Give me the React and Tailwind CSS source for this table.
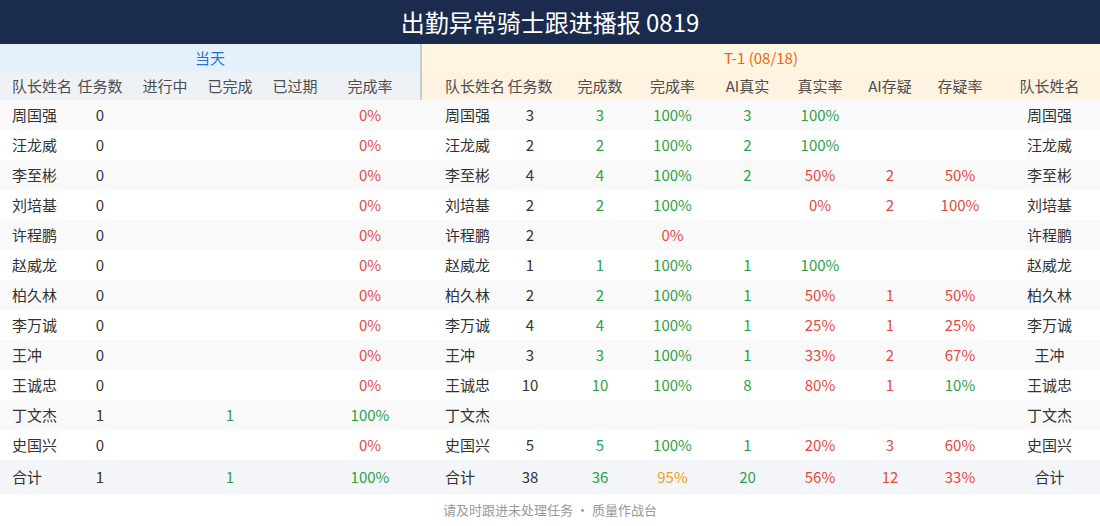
import React from 'react';

const G = 'text-[#2ea04a]';
const R = 'text-[#e24a43]';
const O = 'text-[#e6a023]';

const today = [
  ['周国强', '0', '', '', '', ['0%', R]],
  ['汪龙威', '0', '', '', '', ['0%', R]],
  ['李至彬', '0', '', '', '', ['0%', R]],
  ['刘培基', '0', '', '', '', ['0%', R]],
  ['许程鹏', '0', '', '', '', ['0%', R]],
  ['赵威龙', '0', '', '', '', ['0%', R]],
  ['柏久林', '0', '', '', '', ['0%', R]],
  ['李万诚', '0', '', '', '', ['0%', R]],
  ['王冲', '0', '', '', '', ['0%', R]],
  ['王诚忠', '0', '', '', '', ['0%', R]],
  ['丁文杰', '1', '', '1', '', ['100%', G]],
  ['史国兴', '0', '', '', '', ['0%', R]],
];

// name, tasks, done, doneRate, aiReal, realRate, aiDoubt, doubtRate
const prev = [
  ['周国强', '3', '3', ['100%', G], '3', ['100%', G], '', ['', '']],
  ['汪龙威', '2', '2', ['100%', G], '2', ['100%', G], '', ['', '']],
  ['李至彬', '4', '4', ['100%', G], '2', ['50%', R], '2', ['50%', R]],
  ['刘培基', '2', '2', ['100%', G], '', ['0%', R], '2', ['100%', R]],
  ['许程鹏', '2', '', ['0%', R], '', ['', ''], '', ['', '']],
  ['赵威龙', '1', '1', ['100%', G], '1', ['100%', G], '', ['', '']],
  ['柏久林', '2', '2', ['100%', G], '1', ['50%', R], '1', ['50%', R]],
  ['李万诚', '4', '4', ['100%', G], '1', ['25%', R], '1', ['25%', R]],
  ['王冲', '3', '3', ['100%', G], '1', ['33%', R], '2', ['67%', R]],
  ['王诚忠', '10', '10', ['100%', G], '8', ['80%', R], '1', ['10%', G]],
  ['丁文杰', '', '', ['', ''], '', ['', ''], '', ['', '']],
  ['史国兴', '5', '5', ['100%', G], '1', ['20%', R], '3', ['60%', R]],
];

const rowGrid =
  'grid grid-cols-[70px_60px_70px_60px_70px_80px_12px_73px_70px_70px_75px_75px_70px_70px_70px_1fr] items-center';

const Row = ({ t, p, bg, h }) => (
  <div className={`${rowGrid} ${bg} ${h} text-[15px] text-[#333] whitespace-nowrap`}>
    <div className="pl-3">{t[0]}</div>
    <div className="text-center">{t[1]}</div>
    <div className={`text-center ${G}`}>{t[2]}</div>
    <div className={`text-center ${G}`}>{t[3]}</div>
    <div className={`text-center ${R}`}>{t[4]}</div>
    <div className={`text-center ${t[5][1]}`}>{t[5][0]}</div>
    <div />
    <div className="pl-[23px]">{p[0]}</div>
    <div className="text-center">{p[1]}</div>
    <div className={`text-center ${G}`}>{p[2]}</div>
    <div className={`text-center ${p[3][1]}`}>{p[3][0]}</div>
    <div className={`text-center ${G}`}>{p[4]}</div>
    <div className={`text-center ${p[5][1]}`}>{p[5][0]}</div>
    <div className={`text-center ${R}`}>{p[6]}</div>
    <div className={`text-center ${p[7][1]}`}>{p[7][0]}</div>
    <div className="text-center pl-1">{p[0]}</div>
  </div>
);

export default function App() {
  return (
    <div
      className="w-[1100px] h-[526px] bg-white overflow-hidden"
      style={{ fontFamily: '"Noto Sans CJK SC", "Noto Sans", sans-serif' }}
    >
      <div className="h-[44px] bg-[#1a2b4d] flex items-center justify-center text-white text-[24px]">
        出勤异常骑士跟进播报 0819
      </div>

      {/* header */}
      <div className="flex text-[15px] whitespace-nowrap">
        <div className="w-[420px]">
          <div className="h-[28px] bg-[#e4f1fd] flex items-center justify-center text-[#1f74d4]">当天</div>
          <div className="h-[28px] bg-[#eef1f5] text-[#4d4d4d] grid grid-cols-[70px_60px_70px_60px_70px_80px] items-center">
            <div className="pl-3">队长姓名</div>
            <div className="text-center">任务数</div>
            <div className="text-center">进行中</div>
            <div className="text-center">已完成</div>
            <div className="text-center">已过期</div>
            <div className="text-center">完成率</div>
          </div>
        </div>
        <div className="flex-1 border-l-2 border-[#c9cdd3]">
          <div className="h-[28px] bg-[#fff6e2] flex items-center justify-center text-[#f0650e]">T-1 (08/18)</div>
          <div className="h-[28px] bg-[#fef2e1] text-[#4d4d4d] grid grid-cols-[73px_70px_70px_75px_75px_70px_70px_70px_1fr] items-center">
            <div className="pl-[23px]">队长姓名</div>
            <div className="text-center">任务数</div>
            <div className="text-center">完成数</div>
            <div className="text-center">完成率</div>
            <div className="text-center">AI真实</div>
            <div className="text-center">真实率</div>
            <div className="text-center">AI存疑</div>
            <div className="text-center">存疑率</div>
            <div className="text-center pl-1">队长姓名</div>
          </div>
        </div>
      </div>

      {/* rows */}
      {today.map((t, i) => (
        <Row key={t[0]} t={t} p={prev[i]} h="h-[30px]" bg={i % 2 === 0 ? 'bg-[#f9f9fa]' : 'bg-white'} />
      ))}

      {/* total */}
      <div className={`${rowGrid} bg-[#f4f5f8] h-[34px] text-[15px] text-[#333] whitespace-nowrap`}>
        <div className="pl-3">合计</div>
        <div className="text-center">1</div>
        <div />
        <div className={`text-center ${G}`}>1</div>
        <div />
        <div className={`text-center ${G}`}>100%</div>
        <div />
        <div className="pl-[23px]">合计</div>
        <div className="text-center">38</div>
        <div className={`text-center ${G}`}>36</div>
        <div className={`text-center ${O}`}>95%</div>
        <div className={`text-center ${G}`}>20</div>
        <div className={`text-center ${R}`}>56%</div>
        <div className={`text-center ${R}`}>12</div>
        <div className={`text-center ${R}`}>33%</div>
        <div className="text-center pl-1">合计</div>
      </div>

      <div className="h-[32px] flex items-center justify-center text-[13px] text-[#999]">
        请及时跟进未处理任务 · 质量作战台
      </div>
    </div>
  );
}
